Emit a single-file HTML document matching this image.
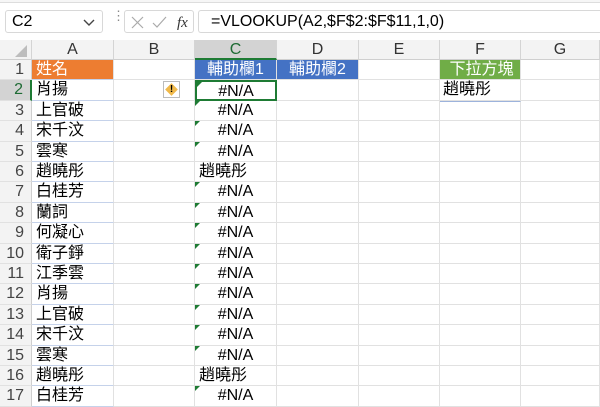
<!DOCTYPE html><html><head><meta charset="utf-8"><style>
body{margin:0;width:600px;height:405px;overflow:hidden;background:#fff;font-family:"Liberation Sans","Noto Sans CJK TC",sans-serif;position:relative}
.a{position:absolute;box-sizing:border-box}
.r{position:absolute;left:0;width:600px;height:20.4px}
.r div{position:absolute;top:0;height:20.4px;box-sizing:border-box;border-right:1px solid #e1e1e1;border-bottom:1px solid #e1e1e1;font-size:16px;line-height:20px;white-space:nowrap}
.h{left:0;width:32px;background:#f3f3f3;color:#444;text-align:right;padding-right:7px;border-right:1px solid #cfcfcf!important}
.ca{left:32px;width:82px;padding-left:4px;border-bottom-color:#c5d2ea!important}
.cb{left:114px;width:81px}.cc{left:195px;width:82px;text-align:center}
.cd{left:277px;width:82px}.ce{left:359px;width:81px}.cf{left:440px;width:81px;padding-left:3px}.cg{left:521px;width:79px}
.t{position:absolute;left:0;top:0;width:0;height:0;border-top:5px solid #1e7b34;border-right:5px solid transparent}
.tx{text-align:left!important;padding-left:4px}
.col{position:absolute;top:40px;height:20px;background:#f3f3f3;border-right:1px solid #d4d4d4;border-bottom:1px solid #cfcfcf;text-align:center;font-size:16px;line-height:20px;color:#333;box-sizing:border-box}
</style></head><body>
<div class="a" style="left:0;top:0;width:600px;height:3px;border-bottom:1px solid #ddd;background:#f6f6f6"></div>
<div class="a" style="left:5px;top:10px;width:98px;height:23px;border:1px solid #d8d8d8;border-radius:3px;font-size:16px;line-height:21px;padding-left:6px">C2<svg width="12" height="8" style="position:absolute;right:7px;top:8px"><path d="M1 1l5 5 5-5" stroke="#444" stroke-width="1.4" fill="none"/></svg></div>
<div class="a" style="left:112px;top:13px;color:#888;font-size:13px;line-height:6px">⋮</div>
<div class="a" style="left:124px;top:10px;width:70px;height:23px;border:1px solid #d8d8d8;border-radius:3px">
<svg width="70" height="23" style="position:absolute;left:0;top:0"><path d="M7 6l11 11M18 6L7 17" stroke="#aaa" stroke-width="1.2" fill="none"/><path d="M28 12l4 4 9-10" stroke="#aaa" stroke-width="1.2" fill="none"/><text x="52" y="16" font-family="Liberation Serif" font-style="italic" font-size="15" fill="#333">fx</text></svg></div>
<div class="a" style="left:198px;top:10px;width:402px;height:23px;border:1px solid #d8d8d8;border-right:none;border-radius:3px 0 0 3px;font-size:16px;line-height:21px;padding-left:12px">=VLOOKUP(A2,$F$2:$F$11,1,0)</div>
<div class="col" style="left:0;width:32px"><svg width="32" height="20"><path d="M27 17V5L15 17z" fill="#bdbdbd"/></svg></div>
<div class="col" style="left:32px;width:82px">A</div><div class="col" style="left:114px;width:81px">B</div>
<div class="col" style="left:195px;width:82px;background:#d3d3d3;border-bottom:2px solid #1e7b34;color:#1e6b34">C</div>
<div class="col" style="left:277px;width:82px">D</div><div class="col" style="left:359px;width:81px">E</div><div class="col" style="left:440px;width:81px">F</div><div class="col" style="left:521px;width:79px">G</div>

<div class="r" style="top:60px"><div class="h">1</div><div class="ca" style="background:#ed7d31;color:#fff">姓名</div><div class="cb"></div><div class="cc" style="background:#4472c4;color:#fff">輔助欄1</div><div class="cd" style="background:#4472c4;color:#fff;text-align:center">輔助欄2</div><div class="ce"></div><div class="cf" style="background:#70ad47;color:#fff;text-align:center">下拉方塊</div><div class="cg"></div></div>
<div class="r" style="top:80.4px"><div class="h" style="background:#d3d3d3;color:#1e6b34;border-right:2px solid #1e7b34!important">2</div><div class="ca">肖揚</div><div class="cb"><span style="position:absolute;left:49px;top:1px;width:17px;height:17px;border:1px solid #bbb;box-sizing:border-box;background:#fff"><span style="position:absolute;left:3px;top:3px;width:9px;height:9px;background:#f0b94a;transform:rotate(45deg)"></span><span style="position:absolute;left:0;width:15px;top:-1px;text-align:center;font-size:10px;font-weight:bold;line-height:17px">!</span></span></div><div class="cc" style="border:2px solid #1e7b34"><span class="t"></span>#N/A</div><div class="cd"></div><div class="ce"></div><div class="cf">趙曉彤</div><div class="cg"></div></div>
<div class="r" style="top:100.8px"><div class="h">3</div><div class="ca">上官破</div><div class="cb"></div><div class="cc"><span class="t"></span>#N/A</div><div class="cd"></div><div class="ce"></div><div class="cf" style="border-top:1px solid #9db3dc"></div><div class="cg"></div></div>
<div class="r" style="top:121.2px"><div class="h">4</div><div class="ca">宋千汶</div><div class="cb"></div><div class="cc"><span class="t"></span>#N/A</div><div class="cd"></div><div class="ce"></div><div class="cf"></div><div class="cg"></div></div>
<div class="r" style="top:141.6px"><div class="h">5</div><div class="ca">雲寒</div><div class="cb"></div><div class="cc"><span class="t"></span>#N/A</div><div class="cd"></div><div class="ce"></div><div class="cf"></div><div class="cg"></div></div>
<div class="r" style="top:162px"><div class="h">6</div><div class="ca">趙曉彤</div><div class="cb"></div><div class="cc tx">趙曉彤</div><div class="cd"></div><div class="ce"></div><div class="cf"></div><div class="cg"></div></div>
<div class="r" style="top:182.4px"><div class="h">7</div><div class="ca">白桂芳</div><div class="cb"></div><div class="cc"><span class="t"></span>#N/A</div><div class="cd"></div><div class="ce"></div><div class="cf"></div><div class="cg"></div></div>
<div class="r" style="top:202.8px"><div class="h">8</div><div class="ca">蘭詞</div><div class="cb"></div><div class="cc"><span class="t"></span>#N/A</div><div class="cd"></div><div class="ce"></div><div class="cf"></div><div class="cg"></div></div>
<div class="r" style="top:223.2px"><div class="h">9</div><div class="ca">何凝心</div><div class="cb"></div><div class="cc"><span class="t"></span>#N/A</div><div class="cd"></div><div class="ce"></div><div class="cf"></div><div class="cg"></div></div>
<div class="r" style="top:243.6px"><div class="h">10</div><div class="ca">衛子錚</div><div class="cb"></div><div class="cc"><span class="t"></span>#N/A</div><div class="cd"></div><div class="ce"></div><div class="cf"></div><div class="cg"></div></div>
<div class="r" style="top:264px"><div class="h">11</div><div class="ca">江季雲</div><div class="cb"></div><div class="cc"><span class="t"></span>#N/A</div><div class="cd"></div><div class="ce"></div><div class="cf"></div><div class="cg"></div></div>
<div class="r" style="top:284.4px"><div class="h">12</div><div class="ca">肖揚</div><div class="cb"></div><div class="cc"><span class="t"></span>#N/A</div><div class="cd"></div><div class="ce"></div><div class="cf"></div><div class="cg"></div></div>
<div class="r" style="top:304.8px"><div class="h">13</div><div class="ca">上官破</div><div class="cb"></div><div class="cc"><span class="t"></span>#N/A</div><div class="cd"></div><div class="ce"></div><div class="cf"></div><div class="cg"></div></div>
<div class="r" style="top:325.2px"><div class="h">14</div><div class="ca">宋千汶</div><div class="cb"></div><div class="cc"><span class="t"></span>#N/A</div><div class="cd"></div><div class="ce"></div><div class="cf"></div><div class="cg"></div></div>
<div class="r" style="top:345.6px"><div class="h">15</div><div class="ca">雲寒</div><div class="cb"></div><div class="cc"><span class="t"></span>#N/A</div><div class="cd"></div><div class="ce"></div><div class="cf"></div><div class="cg"></div></div>
<div class="r" style="top:366px"><div class="h">16</div><div class="ca">趙曉彤</div><div class="cb"></div><div class="cc tx">趙曉彤</div><div class="cd"></div><div class="ce"></div><div class="cf"></div><div class="cg"></div></div>
<div class="r" style="top:386.4px"><div class="h">17</div><div class="ca">白桂芳</div><div class="cb"></div><div class="cc"><span class="t"></span>#N/A</div><div class="cd"></div><div class="ce"></div><div class="cf"></div><div class="cg"></div></div>
</body></html>
